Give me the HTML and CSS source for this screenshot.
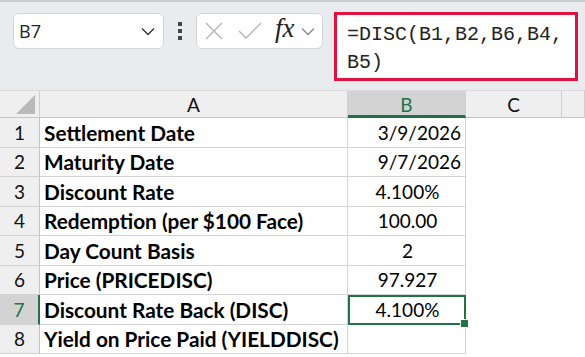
FILE: index.html
```html
<!DOCTYPE html>
<html lang="en">
<head>
  <meta charset="UTF-8">
  <title>DISC</title>
  <link rel="stylesheet" href="styles.css">
</head>
<body>

  <!-- Barra de fórmulas -->
  <div class="toolbar">
    <div class="namebox">
      <span>B7</span>
      <svg width="14" height="9" viewBox="0 0 14 9"><path d="M1 1.5 L7 7.5 L13 1.5" fill="none" stroke="#333" stroke-width="1.4"/></svg>
    </div>
    <div class="dots"><i></i><i></i><i></i></div>
    <div class="fxbox">
      <svg class="ico" width="18" height="18" viewBox="0 0 18 18"><path d="M1 1 L17 17 M17 1 L1 17" stroke="#b4b4b4" stroke-width="1.4"/></svg>
      <svg class="ico" width="24" height="18" viewBox="0 0 24 18"><path d="M1 9 L8 16 L23 1" fill="none" stroke="#b4b4b4" stroke-width="1.4"/></svg>
      <span class="fx">fx</span>
      <svg width="14" height="9" viewBox="0 0 14 9"><path d="M1 1.5 L7 7.5 L13 1.5" fill="none" stroke="#888" stroke-width="1.3"/></svg>
    </div>
    <div class="formula">=DISC(B1,B2,B6,B4,<br>B5)</div>
  </div>

  <!-- Hoja -->
  <div class="sheet">
    <div class="hd corner"><span class="tri"></span></div>
    <div class="hd">A</div>
    <div class="hd sel">B</div>
    <div class="hd">C</div>
    <div class="hd"></div>

    <div class="rn">1</div><div class="ca">Settlement Date</div><div class="cb right">3/9/2026</div><div class="cc"></div><div class="cc"></div>
    <div class="rn">2</div><div class="ca">Maturity Date</div><div class="cb right">9/7/2026</div><div class="cc"></div><div class="cc"></div>
    <div class="rn">3</div><div class="ca">Discount Rate</div><div class="cb">4.100%</div><div class="cc"></div><div class="cc"></div>
    <div class="rn">4</div><div class="ca">Redemption (per $100 Face)</div><div class="cb">100.00</div><div class="cc"></div><div class="cc"></div>
    <div class="rn">5</div><div class="ca">Day Count Basis</div><div class="cb">2</div><div class="cc"></div><div class="cc"></div>
    <div class="rn">6</div><div class="ca">Price (PRICEDISC)</div><div class="cb">97.927</div><div class="cc"></div><div class="cc"></div>
    <div class="rn sel">7</div><div class="ca">Discount Rate Back (DISC)</div><div class="cb active">4.100%<span class="handle"></span></div><div class="cc"></div><div class="cc"></div>
    <div class="rn">8</div><div class="ca">Yield on Price Paid (YIELDDISC)</div><div class="cb"></div><div class="cc"></div><div class="cc"></div>
  </div>

</body>
</html>
```

FILE: styles.css
```css
/* Estilos globales */
body {
  margin: 0;
  width: 585px;
  height: 357px;
  overflow: hidden;
  background: #fff;
  font-family: 'Lato', sans-serif;
  color: #000;
}

/* Barra superior */
.toolbar {
  height: 90px;
  box-sizing: border-box;
  background: #e9ecef;
  border-top: 2px solid #c9cccf;
  display: flex;
  align-items: flex-start;
  padding: 11px 0 0 13px;
}

.namebox {
  width: 151px;
  height: 36px;
  box-sizing: border-box;
  background: #fff;
  border: 1px solid #d3d5d8;
  border-radius: 6px;
  display: flex;
  align-items: center;
  justify-content: space-between;
  padding: 0 8px 0 5px;
  font-family: 'Open Sans', sans-serif;
  font-size: 18px;
  color: #222;
}

.dots {
  width: 32px;
  height: 36px;
  display: flex;
  flex-direction: column;
  align-items: center;
  justify-content: center;
  gap: 3px;
}

.dots i {
  width: 4px;
  height: 4px;
  background: #444;
}

.fxbox {
  width: 127px;
  height: 36px;
  box-sizing: border-box;
  background: #fff;
  border: 1px solid #d3d5d8;
  border-radius: 6px;
  display: flex;
  align-items: center;
  padding: 0 5px 0 8px;
}

.fxbox .ico {
  margin-right: 15px;
}

.fx {
  font-family: 'Liberation Serif', serif;
  font-style: italic;
  font-size: 27px;
  color: #222;
  margin: -6px 6px 0 -2px;
}

.formula {
  margin-left: 11px;
  margin-top: -1px;
  width: 244px;
  height: 69px;
  box-sizing: border-box;
  background: #fff;
  border: 3px solid #e0103f;
  font-family: 'Liberation Mono', monospace;
  font-size: 20px;
  line-height: 28px;
  padding: 6px 0 0 10px;
  color: #222;
  white-space: nowrap;
}

/* Cuadrícula */
.sheet {
  display: grid;
  grid-template-columns: 40px 308px 118px 96px 23px;
  grid-template-rows: 28px repeat(8, 29.5px);
}

.hd {
  background: #efefef;
  border-top: 1px solid #dadada;
  border-right: 1px solid #cfcfcf;
  border-bottom: 1px solid #c4c4c4;
  box-sizing: border-box;
  display: flex;
  align-items: center;
  justify-content: center;
  font-size: 19px;
  color: #111;
}

.hd.sel {
  background: #d3d3d3;
  color: #217346;
  border-bottom: 3px solid #217346;
  padding-top: 2px;
}

.corner {
  position: relative;
}

.tri {
  position: absolute;
  right: 4px;
  bottom: 3px;
  width: 0;
  height: 0;
  border-left: 19px solid transparent;
  border-bottom: 19px solid #b9b9b9;
}

.rn {
  background: #efefef;
  border-right: 1px solid #c4c4c4;
  border-bottom: 1px solid #d2d2d2;
  box-sizing: border-box;
  display: flex;
  align-items: center;
  justify-content: center;
  font-size: 19px;
  color: #111;
}

.rn.sel {
  background: #d3d3d3;
  color: #217346;
  border-right: 2px solid #217346;
}

.ca, .cb {
  border-right: 1px solid #d4d4d4;
  border-bottom: 1px solid #d4d4d4;
  box-sizing: border-box;
  display: flex;
  align-items: center;
  font-size: 19px;
  white-space: nowrap;
  overflow: hidden;
}

.ca {
  font-weight: bold;
  font-size: 20.8px;
  padding-left: 4px;
}

.cb {
  justify-content: center;
  padding-left: 2px;
}

.cb.right {
  justify-content: flex-end;
  padding-right: 4px;
}

.cb.active {
  position: relative;
  overflow: visible;
  outline: 2px solid #217346;
  outline-offset: -2px;
}

.handle {
  position: absolute;
  right: -4px;
  bottom: -4px;
  width: 7px;
  height: 7px;
  background: #217346;
  border: 1px solid #fff;
}

.cc {
  background: #fff;
}
```
